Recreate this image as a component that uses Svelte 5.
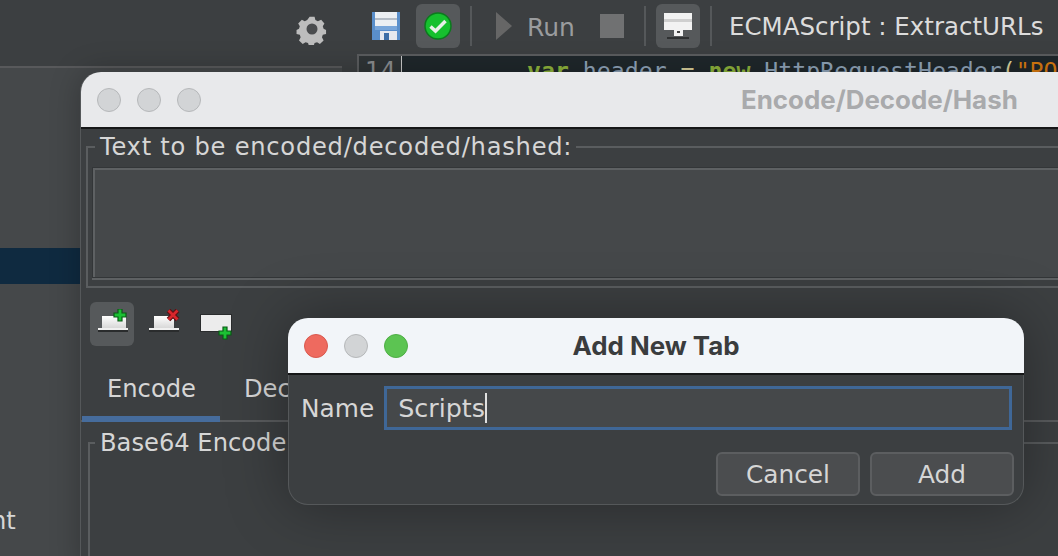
<script>
  let tabName = "Scripts";
</script>

{#snippet slab(x, y, w)}
  <defs>
    <linearGradient id="slab{x}" x1="0" y1="0" x2="0" y2="1">
      <stop offset="0" stop-color="#ffffff" />
      <stop offset="1" stop-color="#d8d8d8" />
    </linearGradient>
  </defs>
  <rect x={x} y={y} width={w} height="12" fill="url(#slab{x})" />
{/snippet}

{#snippet plus(cx, cy)}
  <path d="M{cx - 2} {cy - 6}h4v4h4v4h-4v4h-4v-4h-4v-4h4z" fill="#1cc034" stroke="#0a5a16" stroke-width="1.2" />
{/snippet}

<div class="app">
  <header class="toolbar">
    <svg class="gear" width="32" height="32" viewBox="0 0 32 32">
      <path d="M13 1h6l1 4 3 1.500 4-2 4 4.500-2 3.500 1 3 3 1.500v5l-4 1-1 3 2 4-4.500 4-3.500-2-3 1-1 3h-6l-1-3-3-1-3.500 2-4.500-4 2-4-1-3-4-1v-5l3-1.500 1-3-2-3.500 4.500-4.500 3.500 2 3-1.500z" transform="translate(3 3) scale(.82)" fill="#bdbdbd" />
      <circle cx="16" cy="16" r="5.500" fill="#4a4c4e" />
    </svg>
    <svg class="save" width="28" height="28" viewBox="0 0 28 28">
      <rect width="28" height="28" fill="#5a8fcb" />
      <rect x="3" y="0" width="22" height="14" fill="#eceff3" />
      <rect x="3" y="6" width="22" height="2" fill="#b4bcc6" />
      <rect x="3" y="14" width="22" height="4" fill="#79a6da" />
      <rect x="8" y="19" width="17" height="9" fill="#e6e9ee" />
      <rect x="12" y="21" width="5" height="7" fill="#3d6ea6" />
    </svg>
    <button class="tool active">
      <svg width="28" height="28" viewBox="0 0 28 28">
        <circle cx="14" cy="14" r="13" fill="#16c02e" stroke="#0c7a1e" stroke-width="1.500" />
        <path d="M6.500 14.500l5 4.500 10-10" fill="none" stroke="#e8efe8" stroke-width="3.500" />
      </svg>
    </button>
    <span class="sep"></span>
    <svg class="play" width="16" height="28" viewBox="0 0 16 28"><path d="M0 0l16 14L0 28z" fill="#666" /></svg>
    <span class="run">Run</span>
    <span class="stop"></span>
    <span class="sep"></span>
    <button class="tool active wide">
      <svg width="30" height="32" viewBox="0 0 30 32">
        <rect x="1" y="3" width="28" height="17" fill="#f2f2f2" />
        <rect x="1" y="9" width="28" height="3" fill="#cfcfcf" />
        <rect x="11" y="20" width="9" height="6" fill="#f2f2f2" />
        <rect x="14" y="21" width="3" height="2" fill="#444" />
        <rect x="4" y="27" width="22" height="2" fill="#2f3132" />
      </svg>
    </button>
    <span class="sep"></span>
    <span class="script-title">ECMAScript : ExtractURLs</span>
  </header>

  <div class="workspace">
    <aside class="tree">
      <div class="tree-line"></div>
      <div class="tree-row selected"></div>
      <div class="tree-label">nt</div>
    </aside>
    <section class="editor">
      <div class="gutter">14</div>
      <code class="code"><b>var</b> header <i>=</i> <b>new</b> HttpRequestHeader<i>(</i><u>"PO</u></code>
    </section>
  </div>

  <section class="window encode-window">
    <div class="titlebar">
      <span class="light idle"></span>
      <span class="light idle"></span>
      <span class="light idle"></span>
      <h1>Encode/Decode/Hash</h1>
    </div>
    <div class="window-body">
      <fieldset class="group text-group">
        <legend>Text to be encoded/decoded/hashed:</legend>
        <div class="textarea"></div>
      </fieldset>
      <div class="icon-row">
        <button class="tool active small">
          <svg width="34" height="30" viewBox="0 0 34 30">
            {@render slab(6, 7, 24)}
            <rect x="2" y="19" width="30" height="2" fill="#f0f0f0" />
            <rect x="2" y="21" width="30" height="2" fill="#2a2c2d" />
            {@render plus(24, 6)}
          </svg>
        </button>
        <svg class="row-icon del" width="34" height="30" viewBox="0 0 34 30">
          {@render slab(6, 7, 20)}
          <rect x="1" y="19" width="30" height="2" fill="#f0f0f0" />
          <rect x="1" y="21" width="30" height="2" fill="#2a2c2d" />
          <path d="M20.500 1.500l9 9M29.500 1.500l-9 9" fill="none" stroke="#5e0f12" stroke-width="5" />
          <path d="M20.500 1.500l9 9M29.500 1.500l-9 9" fill="none" stroke="#d9262c" stroke-width="2.800" />
        </svg>
        <svg class="row-icon add" width="34" height="34" viewBox="0 0 34 34">
          <rect x="1.500" y="7.500" width="31" height="17" fill="#ececec" stroke="#2a2c2d" stroke-width="1" />
          {@render plus(26, 26)}
        </svg>
      </div>
      <nav class="tabs">
        <span class="tab current">Encode</span>
        <span class="tab">Decode</span>
      </nav>
      <fieldset class="group base64">
        <legend>Base64 Encode</legend>
      </fieldset>
    </div>
  </section>

  <section class="window dialog">
    <div class="titlebar">
      <span class="light red"></span>
      <span class="light idle"></span>
      <span class="light green"></span>
      <h2>Add New Tab</h2>
    </div>
    <div class="dialog-body">
      <div class="field">
        <label for="tab-name">Name</label>
        <div class="input" id="tab-name">{tabName}<span class="caret"></span></div>
      </div>
      <div class="actions">
        <button class="btn">Cancel</button>
        <button class="btn">Add</button>
      </div>
    </div>
  </section>
</div>

<style>
  :global(body) {
    margin: 0;
    background: #3c3f41;
  }

  .app {
    position: relative;
    width: 1058px;
    height: 556px;
    overflow: hidden;
    background: #3c3f41;
    color: #d6d6d6;
    font-family: "DejaVu Sans", sans-serif;
    font-size: 24.2px;
    display: flex;
    flex-direction: column;
  }

  button {
    font: inherit;
    color: inherit;
    padding: 0;
    border: none;
    background: none;
  }

  /* top toolbar */
  .toolbar {
    height: 54px;
    flex: none;
    display: flex;
    align-items: center;
    padding: 0 0 2px 296px;
    box-sizing: border-box;
  }

  .gear {
    margin-top: 6px;
  }

  .save {
    margin-left: 44px;
    margin-top: -1px;
  }

  .tool {
    width: 44px;
    height: 44px;
    border-radius: 6px;
    display: flex;
    align-items: center;
    justify-content: center;
  }

  .tool.active {
    background: #56595b;
  }

  .toolbar .tool {
    margin-left: 16px;
  }

  .sep {
    width: 2px;
    height: 40px;
    background: #55585a;
    margin-left: 10px;
  }

  .play {
    margin-left: 24px;
  }

  .run {
    margin-left: 15px;
    margin-right: 1px;
    color: #9a9c9e;
    font-size: 25px;
    margin-top: 2px;
  }

  .stop {
    width: 24px;
    height: 24px;
    background: #707172;
    margin-left: 24px;
    margin-right: 10px;
  }

  .toolbar .wide {
    margin-left: 10px;
  }

  .script-title {
    margin-left: 17px;
    font-size: 24.5px;
    white-space: nowrap;
    color: #dcdcdc;
  }

  /* background panes */
  .workspace {
    flex: 1;
    display: flex;
    gap: 15px;
    min-height: 0;
  }

  .tree {
    width: 342px;
    flex: none;
    background: #45484a;
    margin-top: 12px;
    display: flex;
    flex-direction: column;
    overflow: hidden;
  }

  .tree-line {
    height: 2px;
    background: #58595b;
  }

  .tree-row.selected {
    height: 36px;
    margin-top: 180px;
    background: #0f2a40;
  }

  .tree-label {
    margin-top: 222px;
    text-indent: -9px;
    line-height: 30px;
  }

  .editor {
    flex: 1;
    min-width: 0;
    border-top: 2px solid #5a5c5e;
    border-left: 2px solid #5a5c5e;
    background: #1f272b;
    display: flex;
    overflow: hidden;
  }

  .gutter {
    width: 43px;
    height: 100%;
    flex: none;
    box-sizing: border-box;
    background: #2f3436;
    border-right: 1px solid #c8c8c8;
    padding-left: 6px;
    color: #8a8c8e;
    line-height: 30px;
  }

  .code {
    margin-left: 125px;
    font-family: "DejaVu Sans Mono", monospace;
    font-size: 23.2px;
    line-height: 30px;
    color: #8fa3b8;
    white-space: pre;
  }

  .code b {
    color: #8eb33c;
  }

  .code i {
    color: #d8cf9a;
    font-style: normal;
  }

  .code u {
    color: #d87a10;
    text-decoration: none;
  }

  /* floating windows */
  .window {
    position: absolute;
    box-sizing: border-box;
    background: #3c3f41;
  }

  .encode-window {
    left: 80px;
    top: 72px;
    width: 1000px;
    height: 500px;
    border-radius: 20px 20px 0 0;
    border-left: 1px solid #55585a;
    box-shadow: 0 0 30px rgba(0, 0, 0, 0.25);
  }

  .titlebar {
    height: 57px;
    box-sizing: border-box;
    border-bottom: 2px solid #161718;
    background: #e8e9eb;
    border-radius: 20px 20px 0 0;
    display: flex;
    align-items: center;
    gap: 16px;
    padding-left: 16px;
    position: relative;
  }

  .light {
    width: 24px;
    height: 24px;
    box-sizing: border-box;
    border-radius: 50%;
    flex: none;
  }

  .light.idle {
    background: #d2d4d6;
    border: 1px solid #b6b8ba;
  }

  .light.red {
    background: #ee6a5f;
    border: 1px solid #d9584e;
  }

  .light.green {
    background: #5cc452;
    border: 1px solid #4eae45;
  }

  h1,
  h2 {
    margin: 0;
    font-family: Inter, "Liberation Sans", sans-serif;
    font-size: 25.9px;
    font-weight: 700;
    white-space: nowrap;
  }

  h1 {
    color: #a9aaac;
    margin-left: 524px;
  }

  .window-body {
    display: flex;
    flex-direction: column;
  }

  .group {
    margin: 0;
    padding: 0;
    border: 2px solid #5a5d5f;
    min-width: 0;
  }

  legend {
    margin-left: 3px;
    padding: 0 4px 0 5px;
    line-height: 30px;
    color: #d6d6d6;
    white-space: nowrap;
  }

  .text-group {
    margin: 3px 0 0 5px;
    height: 156px;
    box-sizing: border-box;
    padding: 5px 0 0 4px;
  }

  .text-group legend {
    letter-spacing: 0.74px;
  }

  .textarea {
    height: 111px;
    box-sizing: border-box;
    background: #45484a;
    border: 1px solid #333638;
    box-shadow: inset 2px 2px 0 #5e6163, 0 2px 0 #5e6163;
  }

  .icon-row {
    display: flex;
    align-items: center;
    margin: 14px 0 0 9px;
  }

  .small svg {
    margin-left: 6px;
    margin-right: 4px;
  }

  .row-icon {
    flex: none;
  }

  .row-icon.del {
    margin-left: 14px;
  }

  .row-icon.add {
    margin-left: 17px;
  }

  .tabs {
    display: flex;
    margin-top: 16px;
    height: 60px;
    box-sizing: border-box;
    border-bottom: 2px solid #5a5c5e;
    padding-left: 1px;
  }

  .tab {
    padding: 0 24px;
    line-height: 54px;
    height: 60px;
    box-sizing: border-box;
    white-space: nowrap;
  }

  .tab.current {
    padding-left: 25px;
    border-bottom: 6px solid #466c9c;
  }

  .base64 {
    margin: 6px 0 0 7px;
    height: 200px;
  }

  .base64 legend {
    margin-left: 5px;
  }

  .dialog {
    left: 288px;
    top: 318px;
    width: 736px;
    height: 187px;
    border-radius: 20px;
    border: 1px solid #55585a;
    border-top: none;
    box-shadow: 0 0 60px rgba(0, 0, 0, 0.35);
    font-size: 24.8px;
  }

  .dialog .titlebar {
    background: #f2f5f9;
    margin-left: -1px;
    margin-right: -1px;
  }

  h2 {
    color: #3a3c3e;
    position: absolute;
    left: 0;
    right: 0;
    text-align: center;
  }

  .dialog-body {
    display: flex;
    flex-direction: column;
    padding: 11px 9px 0 12px;
  }

  .field {
    display: flex;
    align-items: center;
    gap: 10px;
  }

  .input {
    flex: 1;
    height: 44px;
    box-sizing: border-box;
    margin-right: 2px;
    border: 3px solid #3f6797;
    background: #45484a;
    padding-left: 11px;
    display: flex;
    align-items: center;
    font-size: 25.4px;
  }

  .caret {
    width: 1.5px;
    height: 30px;
    background: #e0e0e0;
  }

  .actions {
    display: flex;
    justify-content: flex-end;
    gap: 10px;
    margin-top: 22px;
  }

  .btn {
    width: 144px;
    height: 44px;
    box-sizing: border-box;
    border: 2px solid #5c5e60;
    border-radius: 6px;
    background: #4b4d4f;
    color: #d6d6d6;
  }
</style>
